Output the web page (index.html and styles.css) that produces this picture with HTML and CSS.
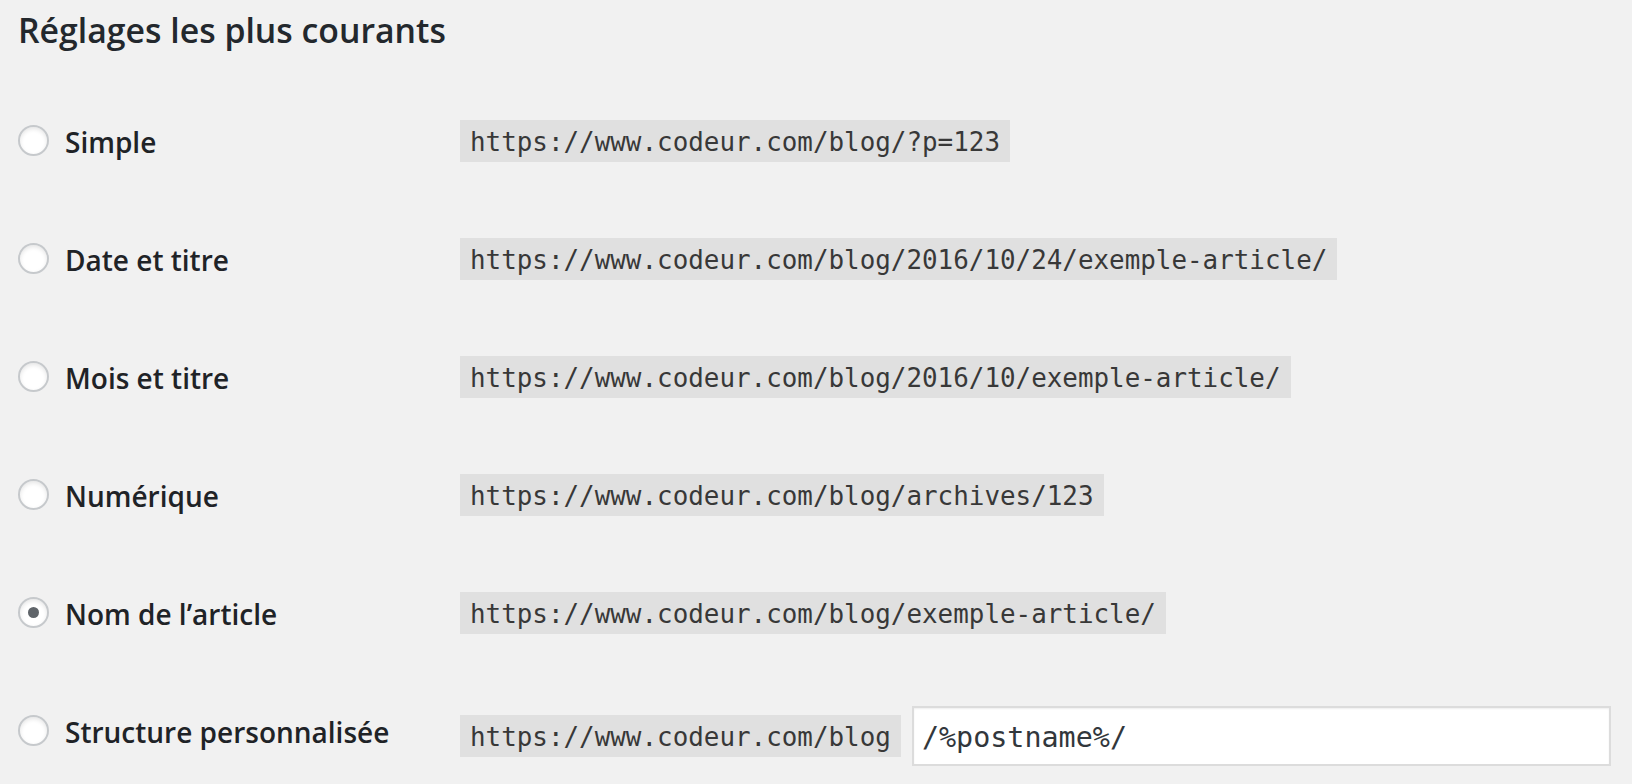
FILE: index.html
```html
<!DOCTYPE html>
<html lang="fr">
<head>
<meta charset="utf-8">
<title>Réglages des permaliens</title>
<link rel="stylesheet" href="styles.css">
</head>
<body>
<div class="page">
  <h2 class="title">Réglages les plus courants</h2>
  <div class="options">
    <div class="option">
      <div class="choice"><span class="radio"></span><span class="label">Simple</span></div>
      <code class="sample"><span class="sample-text">https://www.codeur.com/blog/?p=123</span></code>
    </div>
    <div class="option">
      <div class="choice"><span class="radio"></span><span class="label">Date et titre</span></div>
      <code class="sample"><span class="sample-text">https://www.codeur.com/blog/2016/10/24/exemple-article/</span></code>
    </div>
    <div class="option">
      <div class="choice"><span class="radio"></span><span class="label">Mois et titre</span></div>
      <code class="sample"><span class="sample-text">https://www.codeur.com/blog/2016/10/exemple-article/</span></code>
    </div>
    <div class="option">
      <div class="choice"><span class="radio"></span><span class="label">Numérique</span></div>
      <code class="sample"><span class="sample-text">https://www.codeur.com/blog/archives/123</span></code>
    </div>
    <div class="option">
      <div class="choice"><span class="radio checked"></span><span class="label">Nom de l’article</span></div>
      <code class="sample"><span class="sample-text">https://www.codeur.com/blog/exemple-article/</span></code>
    </div>
    <div class="option option-custom">
      <div class="choice choice-custom"><span class="radio"></span><span class="label">Structure personnalisée</span></div>
      <code class="sample"><span class="sample-text">https://www.codeur.com/blog</span></code>
      <input class="structure" type="text" value="/%postname%/">
    </div>
  </div>
</div>
</body>
</html>
```
FILE: styles.css
```css
html, body {
  margin: 0;
  padding: 0;
  background: #f1f1f1;
}

body {
  font-family: "Open Sans", "Liberation Sans", sans-serif;
  color: #23282d;
}

.page {
  padding-left: 18px;
}

.title {
  margin: 0;
  height: 82px;
  padding-top: 7px;
  box-sizing: border-box;
  font-size: 33.8px;
  font-weight: 600;
  line-height: 46px;
  color: #23282d;
}

.options {
  display: flex;
  flex-direction: column;
}

.option {
  display: flex;
  align-items: center;
  height: 118px;
}

.option-custom {
  height: 128px;
  box-sizing: border-box;
}

.choice {
  display: flex;
  align-items: center;
  width: 442px;
  flex: none;
}

.choice-custom {
  margin-bottom: 10px;
}

.radio {
  position: relative;
  width: 31px;
  height: 31px;
  box-sizing: border-box;
  border: 2px solid #c6c9cc;
  border-radius: 50%;
  background: #fff;
  box-shadow: inset 0 2px 4px rgba(0, 0, 0, 0.1);
  flex: none;
  margin-top: -1px;
}

.radio.checked::after {
  content: "";
  position: absolute;
  left: 8px;
  top: 8px;
  width: 11px;
  height: 11px;
  border-radius: 50%;
  background: #5f6469;
}

.label {
  margin-left: 16px;
  padding-top: 1px;
  font-size: 28px;
  font-weight: 600;
  color: #1f2327;
}

.sample {
  display: inline-block;
  height: 42px;
  box-sizing: border-box;
  padding: 2px 10px 0;
  background: #e0e0e0;
  font-family: "DejaVu Sans Mono", "Liberation Mono", monospace;
  font-size: 25.9px;
  line-height: 40px;
  color: #383838;
  white-space: nowrap;
  flex: none;
}

.structure {
  margin: 0 0 0 11px;
  width: 699px;
  height: 60px;
  box-sizing: border-box;
  border: 2px solid #dcdcdc;
  background: #fff;
  box-shadow: inset 0 1px 2px rgba(0, 0, 0, 0.07);
  padding: 2px 8px 0;
  font-family: "DejaVu Sans Mono", "Liberation Mono", monospace;
  font-size: 28.4px;
  color: #32373c;
  outline: none;
}
```
